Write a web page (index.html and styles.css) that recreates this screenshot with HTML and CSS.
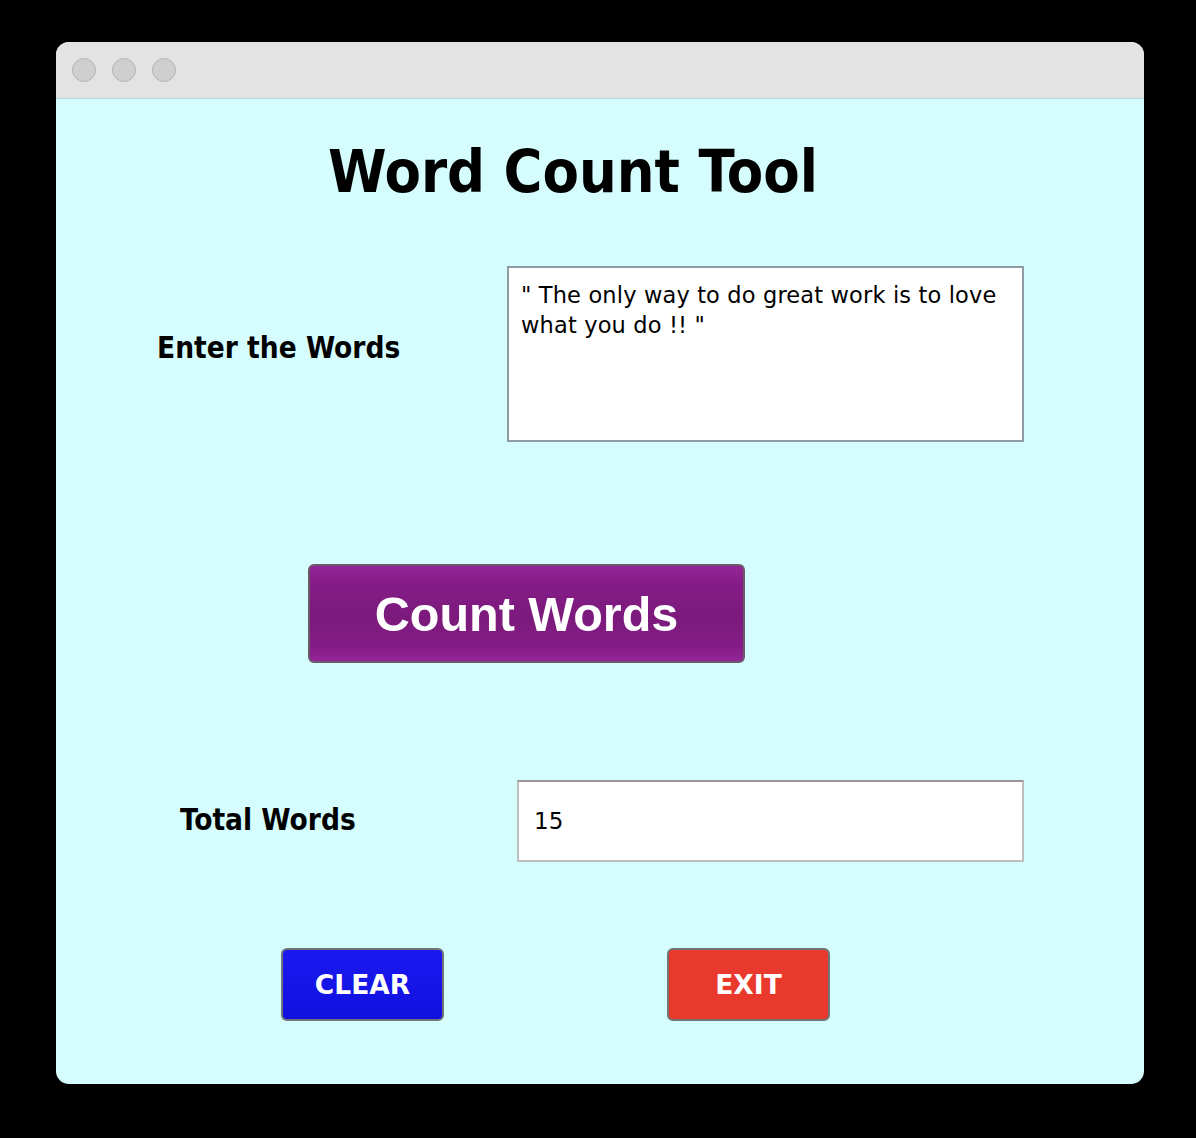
FILE: index.html
```html
<!DOCTYPE html>
<html>
<head>
<meta charset="utf-8">
<link rel="stylesheet" href="styles.css">
</head>
<body>
<div class="window">
  <div class="titlebar">
    <span class="light"></span><span class="light"></span><span class="light"></span>
  </div>
  <div class="content">
    <h1 class="title">Word Count Tool</h1>
    <div class="row row-input">
      <div class="label label-enter">Enter the Words</div>
      <div class="textarea">" The only way to do great work is to love what you do !! "</div>
    </div>
    <div class="row row-count">
      <div class="btn-count">Count Words</div>
    </div>
    <div class="row row-total">
      <div class="label label-total">Total Words</div>
      <div class="field">15</div>
    </div>
    <div class="row row-actions">
      <div class="btn btn-clear">CLEAR</div>
      <div class="btn btn-exit">EXIT</div>
    </div>
  </div>
</div>
</body>
</html>
```

FILE: styles.css
```css
html, body {
  margin: 0;
  padding: 0;
  background: #000;
}
body {
  padding: 42px 52px 54px 56px;
  width: 1196px;
  height: 1138px;
  box-sizing: border-box;
}
.window {
  width: 1088px;
  height: 1042px;
  border-radius: 13px;
  overflow: hidden;
  background: #d5fdfd;
  display: flex;
  flex-direction: column;
}
.titlebar {
  height: 57px;
  background: #e3e3e3;
  border-bottom: 1px solid #b8dada;
  display: flex;
  align-items: center;
  gap: 16px;
  padding-left: 16px;
  box-sizing: border-box;
  flex: none;
}
.light {
  width: 24px;
  height: 24px;
  border-radius: 50%;
  background: #cfcfcf;
  border: 1px solid #b3b3b3;
  box-sizing: border-box;
}
.content {
  display: flex;
  flex-direction: column;
  font-family: "DejaVu Sans", Verdana, sans-serif;
}
.title {
  margin: 43px 0 0 272px;
  font-size: 59px;
  line-height: 1;
  font-weight: bold;
  font-stretch: condensed;
  color: #000;
}
.row {
  display: flex;
  align-items: flex-start;
}
.row-input {
  margin-top: 65px;
}
.label {
  font-weight: bold;
  font-size: 29.5px;
  line-height: 1;
  font-stretch: condensed;
  color: #000;
}
.label-enter {
  margin: 68px 0 0 101px;
  width: 350px;
}
.textarea {
  width: 517px;
  height: 176px;
  box-sizing: border-box;
  background: #fff;
  border: 2px solid #8f9ca6;
  padding: 12px 12px;
  font-size: 22.5px;
  letter-spacing: 0.15px;
  line-height: 30px;
  color: #000;
}
.row-count {
  margin-top: 122px;
  padding-left: 252px;
}
.btn-count {
  width: 437px;
  height: 99px;
  box-sizing: border-box;
  border: 2px solid #6a5a6a;
  border-radius: 6px;
  background: linear-gradient(#942596 0%, #851c86 20%, #7b1a7c 55%, #851c86 85%, #952597 100%);
  color: #fff;
  font-family: "Liberation Sans", Arial, sans-serif;
  font-weight: bold;
  font-size: 48.5px;
  display: flex;
  align-items: center;
  justify-content: center;
}
.row-total {
  margin-top: 117px;
  align-items: center;
}
.label-total {
  margin-left: 124px;
  width: 337px;
}
.field {
  width: 507px;
  height: 82px;
  box-sizing: border-box;
  background: #fff;
  border: 2px solid #bdbdbd;
  border-top-color: #979797;
  padding-left: 15px;
  display: flex;
  align-items: center;
  font-size: 23px;
  color: #000;
}
.row-actions {
  margin-top: 86px;
  padding-left: 225px;
  gap: 223px;
}
.btn {
  width: 163px;
  height: 73px;
  box-sizing: border-box;
  border: 2px solid #6f7476;
  border-radius: 6px;
  color: #fff;
  font-weight: bold;
  font-size: 26.5px;
  display: flex;
  align-items: center;
  justify-content: center;
}
.btn-clear {
  background: linear-gradient(#1a1af0, #1010e0);
}
.btn-exit {
  background: #e9392c;
}
```
